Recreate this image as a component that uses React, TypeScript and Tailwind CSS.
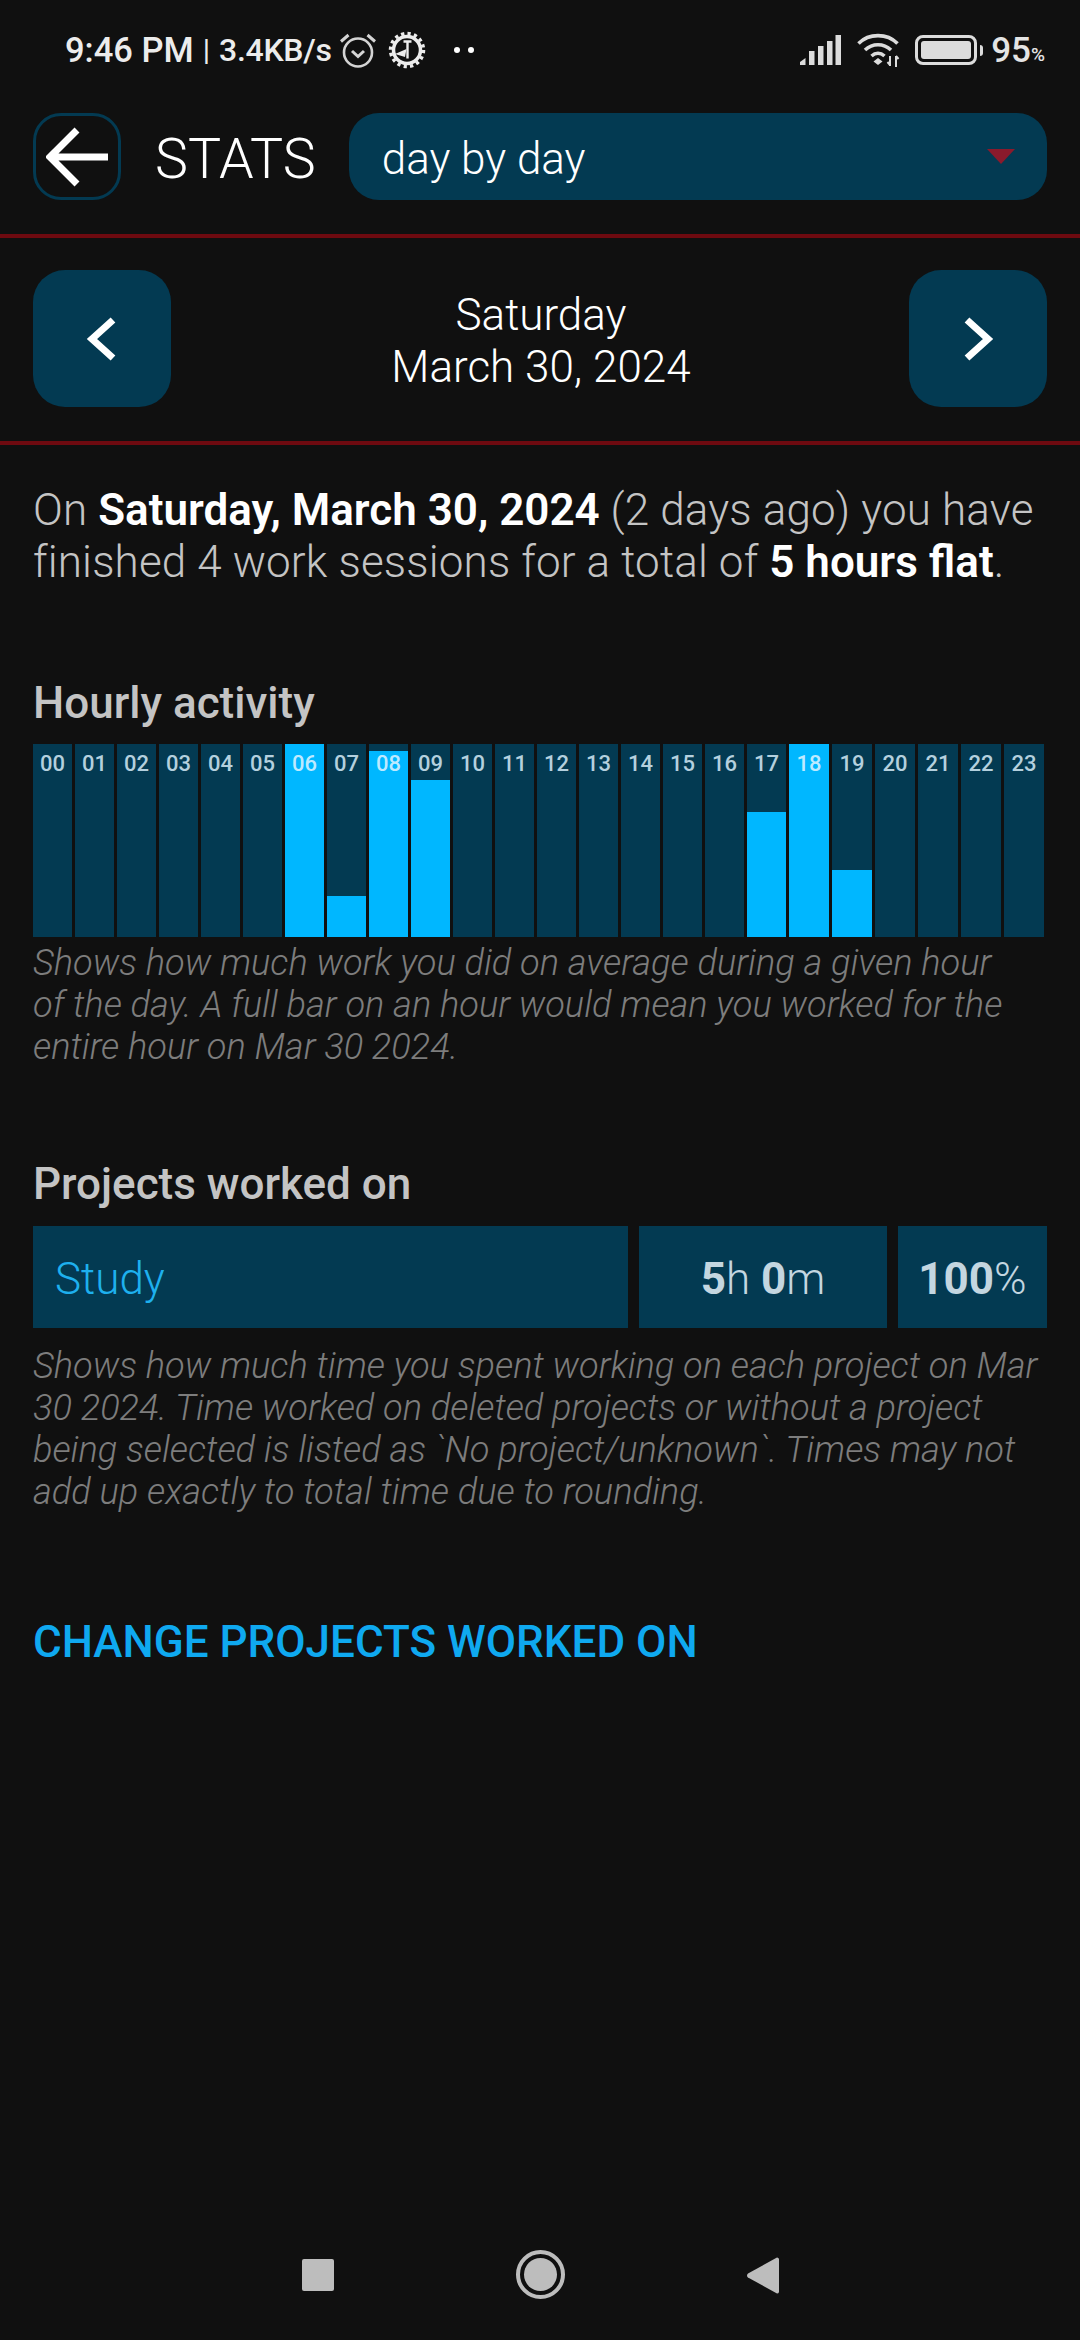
import type { ReactNode } from "react";

const hours = Array.from({ length: 24 }, (_, i) => String(i).padStart(2, "0"));

// filled height of each hourly bar, out of 193px
const fills: Record<number, number> = { 6: 193, 7: 41, 8: 186, 9: 157, 17: 125, 18: 193, 19: 67 };

function AlarmIcon() {
  return (
    <svg width="36" height="36" viewBox="0 0 36 36" fill="none" stroke="#d4d4d4" strokeWidth="2.6">
      <circle cx="18" cy="20.500" r="14" />
      <path d="M12 19l6 5.500 6-5.500" strokeWidth="3" />
      <path d="M1 9.500L8.500 3M35 9.500L27.500 3" strokeWidth="3" />
    </svg>
  );
}

function GearIcon() {
  return (
    <svg width="38" height="38" viewBox="0 0 38 38" fill="none" stroke="#ececec">
      <circle cx="19" cy="19" r="13.500" strokeWidth="3.500" />
      <circle cx="19" cy="19" r="16.500" strokeWidth="3.500" strokeDasharray="3.240 3.240" />
      <path d="M15.500 10.500h8M19.500 10.500v17" strokeWidth="2.400" />
      <path d="M7 23l11.500-5-1.500 8z" fill="#ececec" stroke="none" />
    </svg>
  );
}

function SignalIcon() {
  return (
    <svg width="41" height="30" viewBox="0 0 41 30" fill="#dcdcdc">
      <path d="M0 30v-3l5.500-4v7z" />
      <rect x="9" y="16" width="5.500" height="14" />
      <rect x="18" y="11" width="5.500" height="19" />
      <rect x="27" y="6" width="5.500" height="24" />
      <rect x="35.500" y="0" width="5.500" height="30" />
    </svg>
  );
}

function WifiIcon() {
  return (
    <svg width="44" height="34" viewBox="0 0 44 34" fill="none" stroke="#dcdcdc" strokeWidth="3.600">
      <path d="M1.500 10.500C12 0 30 0 40.500 10.500" />
      <path d="M8 17c7.500-7 18.500-7 26 0" />
      <path d="M14.500 23c4-3.500 9-3.500 13 0" />
      <path d="M21 25l4.500 3.500L21 32l-4.500-3.500z" fill="#dcdcdc" stroke="none" />
      <path d="M33 33v-10M30.500 29l2.500 3M39 34v-11M39 23l2.500 3" strokeWidth="2" />
    </svg>
  );
}

function BatteryIcon() {
  return (
    <div className="flex items-center gap-[3px]">
      <div className="h-[30px] w-[62px] rounded-[8px] border-[3px] border-[#dcdcdc] p-[3px]">
        <div className="h-full w-full rounded-[3px] bg-[#dcdcdc]" />
      </div>
      <div className="h-[11px] w-[3px] rounded-r-sm bg-[#dcdcdc]" />
    </div>
  );
}

function StatusBar() {
  return (
    <div className="flex h-[113px] items-start justify-between pl-[65px] pr-[35px] pt-[30px]">
      <div className="flex items-center text-[#ececec]">
        <span className="text-[34.500px] leading-[40px] font-medium">9:46 PM</span>
        <span className="mx-[9px] text-[30px] leading-[40px]">|</span>
        <span className="text-[32px] leading-[40px] font-medium tracking-[-0.3px]">3.4KB/s</span>
        <span className="ml-[8px]"><AlarmIcon /></span>
        <span className="ml-[12px]"><GearIcon /></span>
        <span className="ml-[28px] flex gap-[8px]">
          <span className="h-[6px] w-[6px] rounded-full bg-white" />
          <span className="h-[6px] w-[6px] rounded-full bg-white" />
        </span>
      </div>
      <div className="-mt-[1px] flex items-center text-[#e4e4e4]">
        <SignalIcon />
        <span className="ml-[16px]"><WifiIcon /></span>
        <span className="ml-[14px]"><BatteryIcon /></span>
        <span className="ml-[8px] mt-[2px] text-[35px] leading-[40px] font-medium">95</span>
        <span className="mt-[9px] text-[19px] leading-[30px] font-medium">%</span>
      </div>
    </div>
  );
}

function Header() {
  return (
    <div className="flex items-center px-[33px]">
      <button className="flex h-[87px] w-[88px] flex-none items-center justify-center rounded-[28px] border-[3px] border-[#033a52]">
        <svg width="62" height="60" viewBox="0 0 62 60" fill="none" stroke="white" strokeWidth="7">
          <path d="M31 3L4 30l27 27M4 30h58" />
        </svg>
      </button>
      <h1 className="ml-[34px] flex-none pt-[6px] text-[55.500px] leading-[60px] font-light text-white">STATS</h1>
      <div className="ml-[33px] flex h-[87px] flex-1 items-center justify-between rounded-[30px] bg-[#033a52] pl-[33px] pr-[32px]">
        <span className="pt-[4px] text-[44px] leading-[52px] font-light text-white">day by day</span>
        <span className="h-0 w-0 border-x-[14px] border-t-[15px] border-x-transparent border-t-[#8a1a2c]" />
      </div>
    </div>
  );
}

function Divider() {
  return <div className="h-[4px] bg-[#6e0a10]" />;
}

function NavButton({ d }: { d: string }) {
  return (
    <button className="flex h-[137px] w-[138px] items-center justify-center rounded-[32px] bg-[#033a52]">
      <svg width="36" height="46" viewBox="0 0 36 46" fill="none" stroke="white" strokeWidth="7">
        <path d={d} />
      </svg>
    </button>
  );
}

function Caption({ children, className }: { children: ReactNode; className: string }) {
  return <p className={`text-[36.200px] leading-[42px] font-light whitespace-nowrap italic text-[#7d7d7d] ${className}`}>{children}</p>;
}

function HourlyChart() {
  return (
    <div className="mt-[17px] flex h-[193px] gap-[3px]">
      {hours.map((h, i) => (
        <div key={h} className={`relative bg-[#033a52] ${i < 18 ? "w-[39px]" : "w-[40px]"}`}>
          {fills[i] && <div className="absolute inset-x-0 bottom-0 bg-[#00b7ff]" style={{ height: fills[i] }} />}
          <span className={`absolute inset-x-0 top-[6px] text-center text-[22px] leading-[28px] font-medium ${fills[i] > 180 ? "text-[#bdeaff]" : "text-[#b4d0de]"}`}>
            {h}
          </span>
        </div>
      ))}
    </div>
  );
}

function NavBar() {
  return (
    <div className="mt-auto flex h-[100px] items-start justify-center">
      <div className="mt-[19px] h-[32px] w-[32px] rounded-[2px] bg-[#bdbdbd]" />
      <div className="mx-[182px] mt-[10px] flex h-[49px] w-[49px] items-center justify-center rounded-full border-[4px] border-[#bdbdbd]">
        <div className="h-[33px] w-[33px] rounded-full bg-[#bdbdbd]" />
      </div>
      <svg className="mt-[17px]" width="32" height="37" viewBox="0 0 32 37" fill="#bdbdbd">
        <path d="M30 0.500a2 2 0 0 1 2 1.500v33a2 2 0 0 1-2 1.500L1 20.500a2.500 2.500 0 0 1 0-4z" />
      </svg>
    </div>
  );
}

export default function App() {
  return (
    <div className="flex h-[2340px] flex-col bg-[#101010] font-['Roboto',sans-serif] text-white">
      <StatusBar />
      <Header />
      <div className="mt-[34px]"><Divider /></div>
      <div className="flex items-center justify-between px-[33px] pt-[32px] pb-[34px]">
        <NavButton d="M29 4L8 23l21 19" />
        <div className="pt-[5px] pl-[2px] text-center text-[44px] leading-[52px] font-light">
          <div>Saturday</div>
          <div>March 30, 2024</div>
        </div>
        <NavButton d="M7 4l21 19L7 42" />
      </div>
      <Divider />

      <div className="flex flex-1 flex-col px-[33px]">
        <p className="mt-[39px] text-[44px] leading-[52px] font-light tracking-[0.15px] text-[#c4c4c4]">
          On <b className="font-semibold tracking-normal text-white">Saturday, March 30, 2024</b> (2 days ago) you have finished 4 work sessions for a total of{" "}
          <b className="font-semibold tracking-normal text-white">5 hours flat</b>.
        </p>

        <h2 className="mt-[91px] text-[44px] leading-[48px] font-medium text-[#c4c4c4]">Hourly activity</h2>
        <HourlyChart />
        <Caption className="mt-[5px]">
          Shows how much work you did on average during a given hour
          <br />
          of the day. A full bar on an hour would mean you worked for the
          <br />
          entire hour on Mar 30 2024.
        </Caption>

        <h2 className="mt-[92px] text-[44px] leading-[48px] font-medium text-[#c4c4c4]">Projects worked on</h2>
        <div className="mt-[18px] flex h-[102px] gap-[11px] text-[44px]">
          <div className="flex w-[595px] items-center bg-[#033a52] pl-[22px] pt-[3px] font-light text-[#1eb0ee]">Study</div>
          <div className="flex w-[248px] items-center justify-center bg-[#033a52] pt-[3px] font-light text-[#c4d6e0]">
            <b className="font-bold">5</b>h&nbsp;<b className="font-bold">0</b>m
          </div>
          <div className="flex flex-1 items-center justify-center bg-[#033a52] pt-[3px] font-light text-[#c4d6e0]">
            <b className="font-bold">100</b>%
          </div>
        </div>
        <Caption className="mt-[17px]">
          Shows how much time you spent working on each project on Mar
          <br />
          30 2024. Time worked on deleted projects or without a project
          <br />
          being selected is listed as `No project/unknown`. Times may not
          <br />
          add up exactly to total time due to rounding.
        </Caption>

        <a className="mt-[104px] text-[44px] leading-[50px] font-medium text-[#0fa9f0]">CHANGE PROJECTS WORKED ON</a>
      </div>
      <NavBar />
    </div>
  );
}
